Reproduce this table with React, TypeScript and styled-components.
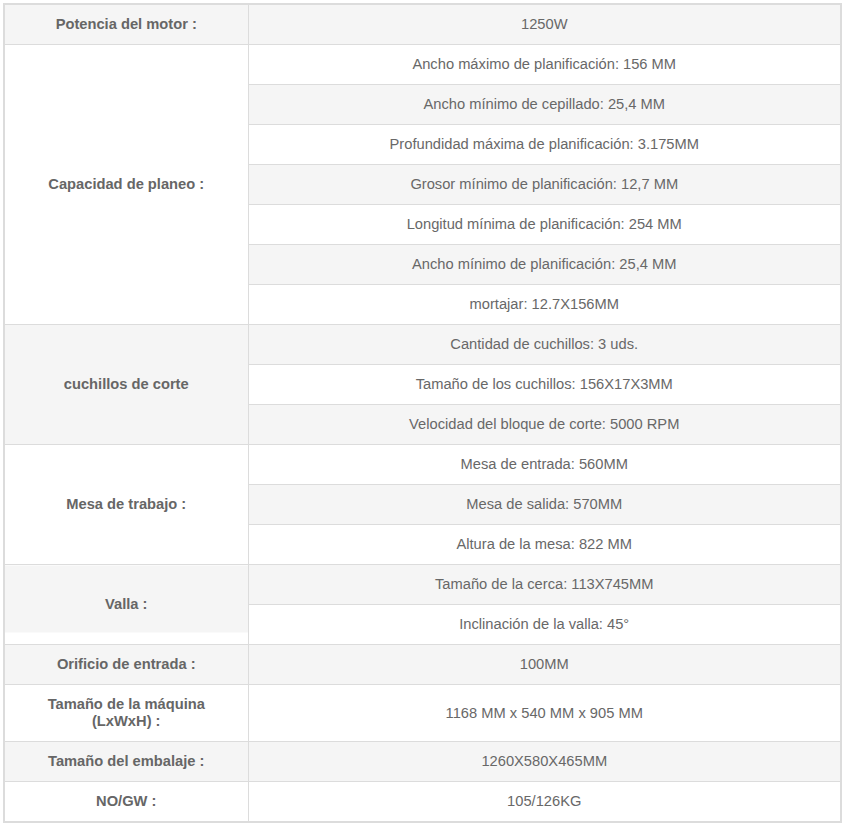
import React from "react";
import styled, { createGlobalStyle } from "styled-components";

const GlobalStyle = createGlobalStyle`
  html, body { margin: 0; padding: 0; background: #ffffff; }
  body { font-family: "Liberation Sans", Arial, sans-serif; }
`;

const Page = styled.div`
  padding: 3px 3px 4px 3px;
`;

const Table = styled.table`
  width: 839px;
  table-layout: fixed;
  border-collapse: collapse;
  border: 2px solid #dcdcdc;
  font-size: 14.7px;
  line-height: 17px;
  color: #686868;
`;

const Row = styled.tr<{ $shaded: boolean }>`
  background: ${(p) => (p.$shaded ? "#f5f5f5" : "#ffffff")};
`;

const LabelCell = styled.td<{ $short?: boolean }>`
  border: 1px solid #dcdcdc;
  border-left: 2px solid #dcdcdc;
  padding: 11px 18px;
  text-align: center;
  vertical-align: middle;
  font-weight: bold;
  color: #666666;
  ${(p) =>
    p.$short
      ? "background: linear-gradient(#f5f5f5 0, #f5f5f5 calc(100% - 12px), #ffffff calc(100% - 12px));"
      : ""}
`;

const ValueCell = styled.td`
  border: 1px solid #dcdcdc;
  border-right: 2px solid #dcdcdc;
  padding: 11px 10px;
  text-align: center;
  vertical-align: middle;
`;

type Group = { label: string; values: string[]; short?: boolean };

const groups: Group[] = [
  { label: "Potencia del motor :", values: ["1250W"] },
  {
    label: "Capacidad de planeo :",
    values: [
      "Ancho máximo de planificación: 156 MM",
      "Ancho mínimo de cepillado: 25,4 MM",
      "Profundidad máxima de planificación: 3.175MM",
      "Grosor mínimo de planificación: 12,7 MM",
      "Longitud mínima de planificación: 254 MM",
      "Ancho mínimo de planificación: 25,4 MM",
      "mortajar: 12.7X156MM",
    ],
  },
  {
    label: "cuchillos de corte",
    values: [
      "Cantidad de cuchillos: 3 uds.",
      "Tamaño de los cuchillos: 156X17X3MM",
      "Velocidad del bloque de corte: 5000 RPM",
    ],
  },
  {
    label: "Mesa de trabajo :",
    values: [
      "Mesa de entrada: 560MM",
      "Mesa de salida: 570MM",
      "Altura de la mesa: 822 MM",
    ],
  },
  {
    label: "Valla :",
    values: ["Tamaño de la cerca: 113X745MM", "Inclinación de la valla: 45°"],
    short: true,
  },
  { label: "Orificio de entrada :", values: ["100MM"] },
  { label: "Tamaño de la máquina (LxWxH) :", values: ["1168 MM x 540 MM x 905 MM"] },
  { label: "Tamaño del embalaje :", values: ["1260X580X465MM"] },
  { label: "NO/GW :", values: ["105/126KG"] },
];

export default function App() {
  let index = 0;
  const rows: React.ReactNode[] = [];
  groups.forEach((g, gi) => {
    g.values.forEach((v, vi) => {
      index += 1;
      const shaded = index % 2 === 1;
      rows.push(
        <Row key={`${gi}-${vi}`} $shaded={shaded}>
          {vi === 0 && (
            <LabelCell rowSpan={g.values.length} $short={g.short}>
              {g.label}
            </LabelCell>
          )}
          <ValueCell>{v}</ValueCell>
        </Row>
      );
    });
  });
  return (
    <>
      <GlobalStyle />
      <Page>
        <Table>
          <colgroup>
            <col style={{ width: 244 }} />
            <col />
          </colgroup>
          <tbody>{rows}</tbody>
        </Table>
      </Page>
    </>
  );
}
